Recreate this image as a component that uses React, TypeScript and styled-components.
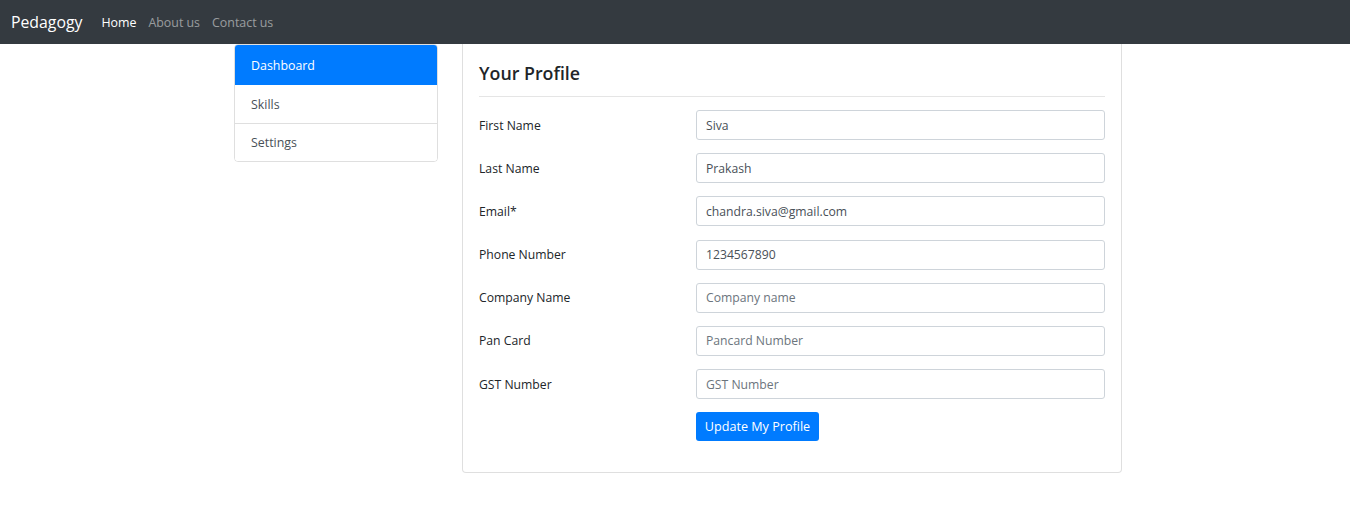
import styled, { createGlobalStyle } from "styled-components";

const GlobalStyle = createGlobalStyle`
  body {
    margin: 0;
    font-family: "Open Sans", "Noto Sans", sans-serif;
    font-size: 12.2px;
    color: #212529;
    background: #fff;
  }
  * { box-sizing: border-box; }
`;

type Field = {
  label: string;
  value?: string;
  placeholder?: string;
};

const fields: Field[] = [
  { label: "First Name", value: "Siva" },
  { label: "Last Name", value: "Prakash" },
  { label: "Email*", value: "chandra.siva@gmail.com" },
  { label: "Phone Number", value: "1234567890" },
  { label: "Company Name", placeholder: "Company name" },
  { label: "Pan Card", placeholder: "Pancard Number" },
  { label: "GST Number", placeholder: "GST Number" },
];

const menu = ["Dashboard", "Skills", "Settings"];

export default function App() {
  return (
    <>
      <GlobalStyle />
      <Navbar>
        <Brand>Pedagogy</Brand>
        <NavLinks>
          <NavLink $active>Home</NavLink>
          <NavLink>About us</NavLink>
          <NavLink>Contact us</NavLink>
        </NavLinks>
      </Navbar>
      <Main>
        <SideList>
          {menu.map((item, i) => (
            <SideItem key={item} $active={i === 0}>
              {item}
            </SideItem>
          ))}
        </SideList>
        <Card>
          <Title>Your Profile</Title>
          <Divider />
          <Form>
            {fields.map(f => (
              <FormRow key={f.label}>
                <Label>{f.label}</Label>
                <Input defaultValue={f.value} placeholder={f.placeholder} />
              </FormRow>
            ))}
            <FormRow>
              <span />
              <div>
                <Button type="button">Update My Profile</Button>
              </div>
            </FormRow>
          </Form>
        </Card>
      </Main>
    </>
  );
}

const Navbar = styled.nav`
  height: 44px;
  background: #343a40;
  display: flex;
  align-items: center;
  padding: 0 11px;
`;

const Brand = styled.a`
  color: #fff;
  font-size: 15.8px;
  margin-right: 19px;
`;

const NavLinks = styled.div`
  display: flex;
  gap: 12px;
`;

const NavLink = styled.a<{ $active?: boolean }>`
  font-size: 12.4px;
  color: ${p => (p.$active ? "#fff" : "rgba(255,255,255,0.5)")};
`;

const Main = styled.div`
  display: flex;
  align-items: flex-start;
  gap: 24px;
  padding-left: 234px;
`;

const SideList = styled.ul`
  width: 204px;
  margin: 0;
  padding: 0;
  list-style: none;
  border: 1px solid rgba(0, 0, 0, 0.125);
  border-radius: 4px;
  overflow: hidden;
`;

const SideItem = styled.li<{ $active?: boolean }>`
  height: ${p => (p.$active ? "40px" : "38px")};
  display: flex;
  align-items: center;
  padding-left: 16px;
  font-size: 12.4px;
  color: ${p => (p.$active ? "#fff" : "#495057")};
  background: ${p => (p.$active ? "#007bff" : "#fff")};
  border-top: ${p => (p.$active ? "none" : "1px solid rgba(0,0,0,0.125)")};
  &:nth-child(2) {
    border-top: none;
  }
`;

const Card = styled.section`
  width: 660px;
  border: 1px solid rgba(0, 0, 0, 0.125);
  border-top: none;
  border-radius: 0 0 4px 4px;
  padding: 16px 16px 31px;
`;

const Title = styled.h4`
  margin: 0;
  font-size: 17.8px;
  font-weight: 600;
  line-height: 27px;
`;

const Divider = styled.hr`
  margin: 9px 0 13px;
  border: 0;
  border-top: 1px solid rgba(0, 0, 0, 0.1);
`;

const Form = styled.div`
  display: flex;
  flex-direction: column;
  gap: 13.2px;
`;

const FormRow = styled.div`
  display: grid;
  grid-template-columns: 217px 1fr;
  align-items: center;
`;

const Label = styled.label`
  font-size: 12.2px;
`;

const Input = styled.input`
  height: 30px;
  width: 100%;
  border: 1px solid #ced4da;
  border-radius: 3px;
  padding: 0 9px;
  font-family: inherit;
  font-size: 12.2px;
  color: #495057;
  &::placeholder {
    color: #6c757d;
  }
`;

const Button = styled.button`
  height: 29px;
  width: 123px;
  padding: 0;
  border: none;
  border-radius: 3px;
  background: #007bff;
  color: #fff;
  font-family: inherit;
  font-size: 12.6px;
`;
